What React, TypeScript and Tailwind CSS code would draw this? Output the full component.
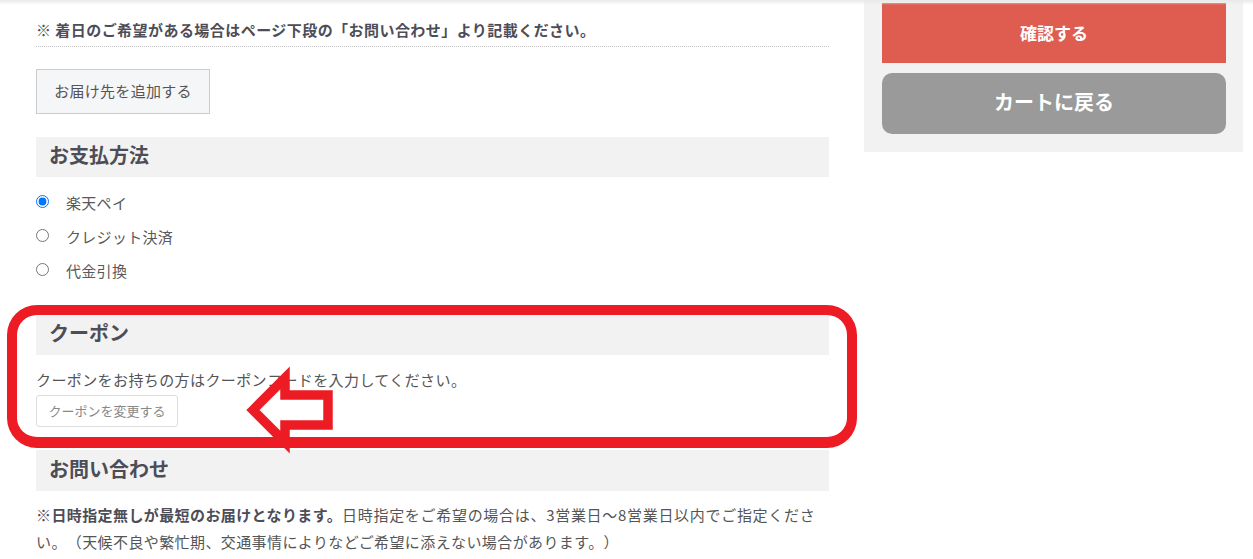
export default function App() {
  return (
    <div className="relative min-h-[559px] overflow-hidden bg-white font-['Noto_Sans_CJK_JP',sans-serif] text-[#555] [text-spacing-trim:space-all]">
      <div className="pointer-events-none absolute inset-x-0 top-0 z-20 h-[5px] bg-linear-to-b from-[#e9e9e9] to-transparent" />
      <div className="flex pl-[36px]">
        {/* left column */}
        <div className="w-[793px] pt-[18px]">
          <p className="border-b border-dotted border-[#c4c4c4] pb-[4px] text-[15px] font-bold leading-[24px] tracking-[0.45px] text-[#4d4d57]">
            ※ 着日のご希望がある場合はページ下段の「お問い合わせ」より記載ください。
          </p>
          <button className="mt-[22px] h-[45px] w-[174px] border border-[#cccccc] bg-[#f5f6f8] text-[15px] tracking-[0.3px] text-[#555]">
            お届け先を追加する
          </button>

          <h2 className="mt-[23px] h-[40px] bg-[#f2f2f2] pl-[13px] text-[20px] font-bold leading-[36px] text-[#4d4d57]">
            お支払方法
          </h2>
          <div className="mt-[9px]">
            {[
              { label: "楽天ペイ", checked: true },
              { label: "クレジット決済", checked: false },
              { label: "代金引換", checked: false },
            ].map((r) => (
              <label key={r.label} className="flex h-[34px] items-center">
                <input
                  type="radio"
                  name="pay"
                  defaultChecked={r.checked}
                  className="m-0 h-[13px] w-[13px] -translate-y-[2px]"
                />
                <span className="ml-[17px] text-[15px] leading-[24px] tracking-[0.3px] text-[#5a5a5a]">{r.label}</span>
              </label>
            ))}
          </div>

          {/* coupon */}
          <div className="relative mt-[27px]">
            <h2 className="h-[40px] bg-[#f2f2f2] pl-[13px] text-[20px] font-bold leading-[36px] text-[#4d4d57]">
              クーポン
            </h2>
            <p className="mt-[13px] text-[15px] leading-[24px] tracking-[0.4px] text-[#555]">
              クーポンをお持ちの方はクーポンコードを入力してください。
            </p>
            <button className="mt-[3px] h-[32px] w-[142px] rounded-[3px] border border-[#dddddd] bg-white text-[13px] text-[#888]">
              クーポンを変更する
            </button>
            <div className="pointer-events-none absolute -left-[29px] -right-[28px] -top-[10px] -bottom-[21px] z-10 rounded-[30px] border-[10px] border-b-[11px] border-[#ed1c24]" />
            <svg
              className="pointer-events-none absolute left-[200px] top-[50px] z-10"
              width="112"
              height="100"
              viewBox="0 0 112 100"
            >
              <polygon
                points="17,45 49,13 49,30 92,30 92,60 49,60 49,77"
                fill="none"
                stroke="#ed1c24"
                strokeWidth="9.5"
                strokeLinejoin="miter"
                strokeMiterlimit="10"
              />
            </svg>
          </div>

          {/* contact */}
          <h2 className="mt-[23px] h-[41px] bg-[#f2f2f2] pl-[13px] text-[20px] font-bold leading-[37px] text-[#4d4d57]">
            お問い合わせ
          </h2>
          <p className="mt-[10px] text-[15px] leading-[27px] tracking-[0.4px] text-[#555]">
            <b className="font-bold text-[#4d4d57]">※日時指定無しが最短のお届けとなります。</b>
            <span className="tracking-[0.7px]">日時指定をご希望の場合は、3営業日～8営業日以内でご指定くださ</span>
            い。（天候不良や繁忙期、交通事情によりなどご希望に添えない場合があります。）
          </p>
        </div>

        {/* right panel */}
        <div className="ml-[35px] w-[379px] self-start bg-[#f2f2f2] pb-[18px] pl-[18px] pr-[17px] pt-[3px]">
          <button className="flex h-[60px] w-full items-center justify-center bg-[#df5d50] text-[17px] font-bold text-white">
            確認する
          </button>
          <button className="mt-[10px] flex h-[61px] w-full items-center justify-center rounded-[10px] bg-[#9a9a9a] pb-[4px] text-[20px] font-bold text-white">
            カートに戻る
          </button>
        </div>
      </div>
    </div>
  );
}
